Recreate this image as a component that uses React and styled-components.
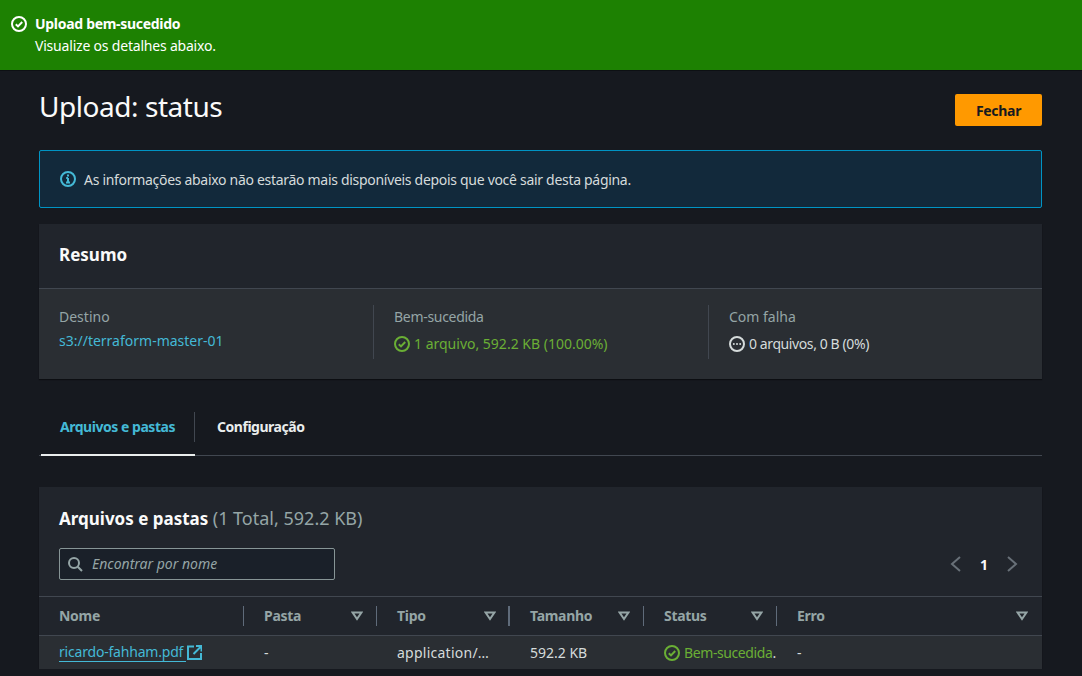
import styled, { createGlobalStyle } from "styled-components";

const GlobalStyle = createGlobalStyle`
  html, body {
    margin: 0;
    background: #16191f;
    font-family: "Noto Sans", "Open Sans", sans-serif;
    font-size: 14px;
    color: #d5dbdb;
    overflow: hidden;
  }
`;

const columns = [
  { name: "Nome" },
  { name: "Pasta", filter: true },
  { name: "Tipo", filter: true, thick: true },
  { name: "Tamanho", filter: true },
  { name: "Status", filter: true },
  { name: "Erro", filter: true, last: true },
];

function CheckCircle({ size = 16, color = "currentColor" }) {
  return (
    <svg width={size} height={size} viewBox="0 0 16 16" fill="none" stroke={color} strokeWidth="2">
      <circle cx="8" cy="8" r="7" />
      <path d="M4.8 8.2l2.2 2.2 4.2-4.4" />
    </svg>
  );
}

function InfoCircle() {
  return (
    <svg width="16" height="16" viewBox="0 0 16 16" fill="none" stroke="#44b9d6" strokeWidth="2">
      <circle cx="8" cy="8" r="7" />
      <path d="M8 7v4.5M6 11.6h4M6.2 7.1H8" strokeWidth="2" />
      <path d="M8 3.6v1.8" strokeWidth="2" />
    </svg>
  );
}

function PendingCircle() {
  return (
    <svg width="16" height="16" viewBox="0 0 16 16" fill="none" stroke="#d5dbdb" strokeWidth="2">
      <circle cx="8" cy="8" r="7" />
      <circle cx="4.8" cy="8" r="1" fill="#d5dbdb" stroke="none" />
      <circle cx="8" cy="8" r="1" fill="#d5dbdb" stroke="none" />
      <circle cx="11.2" cy="8" r="1" fill="#d5dbdb" stroke="none" />
    </svg>
  );
}

function SearchIcon() {
  return (
    <svg width="16" height="16" viewBox="0 0 16 16" fill="none" stroke="#95a5a6" strokeWidth="2">
      <circle cx="7" cy="7" r="5" />
      <path d="M10.7 10.7L15 15" />
    </svg>
  );
}

function ExternalIcon() {
  return (
    <svg width="15" height="15" viewBox="0 0 15 15" fill="none" stroke="#44b9d6" strokeWidth="2">
      <path d="M7 1.5H1v12.5h13V8" />
      <path d="M9 1h5.5v5.5M14 1.5L6.5 9" />
    </svg>
  );
}

function SortCaret() {
  return (
    <svg width="12" height="10" viewBox="0 0 12 10" fill="none" stroke="#95a5a6" strokeWidth="2">
      <path d="M1.6 1.5h8.8L6 8z" />
    </svg>
  );
}

function Chevron({ flip }) {
  return (
    <svg width="12" height="16" viewBox="0 0 12 16" fill="none" stroke="#687078" strokeWidth="2">
      <path d={flip ? "M2 1l8 7-8 7" : "M10 1L2 8l8 7"} />
    </svg>
  );
}

export default function App() {
  return (
    <>
      <GlobalStyle />
      <Flash>
        <FlashIcon><CheckCircle size={16} color="#fff" /></FlashIcon>
        <div>
          <FlashTitle>Upload bem-sucedido</FlashTitle>
          <FlashText>Visualize os detalhes abaixo.</FlashText>
        </div>
      </Flash>
      <Page>
        <Header>
          <Title>Upload: status</Title>
          <CloseButton>Fechar</CloseButton>
        </Header>
        <InfoBox>
          <InfoCircle />
          As informações abaixo não estarão mais disponíveis depois que você sair desta página.
        </InfoBox>
        <SummaryCard>
          <CardHeading>Resumo</CardHeading>
          <SummaryBody>
            <SummaryCol>
              <Label>Destino</Label>
              <BucketLink>s3://terraform-master-01</BucketLink>
            </SummaryCol>
            <SummaryCol>
              <Label $tight>Bem-sucedida</Label>
              <StatusLine $color="#6aaf35">
                <CheckCircle size={16} />
                1 arquivo, 592.2 KB (100.00%)
              </StatusLine>
            </SummaryCol>
            <SummaryCol>
              <Label>Com falha</Label>
              <StatusLine $color="#d5dbdb" $tight>
                <PendingCircle />
                0 arquivos, 0 B (0%)
              </StatusLine>
            </SummaryCol>
          </SummaryBody>
        </SummaryCard>
        <Tabs>
          <Tab $active>Arquivos e pastas</Tab>
          <Tab>Configuração</Tab>
        </Tabs>
        <TableCard>
          <TableTitle>
            Arquivos e pastas <Count>(1 Total, 592.2 KB)</Count>
          </TableTitle>
          <Toolbar>
            <Search>
              <SearchIcon />
              <Placeholder>Encontrar por nome</Placeholder>
            </Search>
            <Pager>
              <Chevron />
              <PageNumber>1</PageNumber>
              <Chevron flip />
            </Pager>
          </Toolbar>
          <HeadRow>
            {columns.map((c) => (
              <HeadCell key={c.name} $last={c.last} $thick={c.thick}>
                <HeadLabel>{c.name}</HeadLabel>
                {c.filter && <SortCaret />}
              </HeadCell>
            ))}
          </HeadRow>
          <BodyRow>
            <Cell>
              <FileLink>ricardo-fahham.pdf</FileLink>
              <ExternalIcon />
            </Cell>
            <Cell>-</Cell>
            <Cell $spacing="0.25px">application/…</Cell>
            <Cell>592.2 KB</Cell>
            <Cell>
              <StatusLine $color="#6aaf35" $tight>
                <CheckCircle size={16} />
                <span>Bem-sucedida<Dot>.</Dot></span>
              </StatusLine>
            </Cell>
            <Cell>-</Cell>
          </BodyRow>
        </TableCard>
      </Page>
    </>
  );
}

const Flash = styled.div`
  height: 71px;
  box-sizing: border-box;
  background: #1d8102;
  border-bottom: 1px solid #0d1014;
  color: #fff;
  display: flex;
  gap: 8px;
  padding: 14px 0 0 11px;
`;

const FlashIcon = styled.div`
  display: flex;
  padding-top: 2px;
`;

const FlashTitle = styled.div`
  font-weight: 700;
  line-height: 20px;
  letter-spacing: -0.3px;
`;

const FlashText = styled.div`
  line-height: 22px;
  padding-top: 1px;
  letter-spacing: -0.2px;
`;

const Page = styled.div`
  padding: 0 40px 0 39px;
`;

const Header = styled.div`
  display: flex;
  justify-content: space-between;
  align-items: flex-start;
  height: 79px;
  box-sizing: border-box;
  padding-top: 16px;
`;

const Title = styled.h1`
  margin: 0;
  font-size: 28px;
  line-height: 38px;
  font-weight: 400;
  letter-spacing: -0.45px;
  color: #fafafa;
`;

const CloseButton = styled.button`
  width: 87px;
  height: 32px;
  border: none;
  border-radius: 2px;
  background: #ff9900;
  color: #16191f;
  font: 700 14px "Noto Sans", sans-serif;
  letter-spacing: -0.3px;
  margin-top: 7px;
`;

const InfoBox = styled.div`
  height: 58px;
  box-sizing: border-box;
  border: 1px solid #0094c4;
  border-radius: 2px;
  background: #12293b;
  display: flex;
  align-items: center;
  gap: 8px;
  padding-left: 20px;
  letter-spacing: -0.3px;
`;

const SummaryCard = styled.section`
  margin-top: 16px;
  background: #21252c;
  box-shadow: 0 1px 1px #0c0e12;
`;

const CardHeading = styled.h2`
  margin: 0;
  height: 65px;
  box-sizing: border-box;
  padding: 19px 20px 0;
  font-size: 17px;
  font-weight: 700;
  line-height: 24px;
  color: #fafafa;
  border-bottom: 1px solid #414750;
`;

const SummaryBody = styled.div`
  background: #2a2e33;
  height: 90px;
  box-sizing: border-box;
  padding: 16px 0 0 20px;
  display: grid;
  grid-template-columns: 314px 335px 1fr;
`;

const SummaryCol = styled.div`
  height: 54px;
  box-sizing: border-box;
  padding-top: 1px;
  & + & {
    border-left: 1px solid #414750;
    padding-left: 20px;
  }
`;

const Label = styled.div`
  color: #95a5a6;
  line-height: 22px;
  letter-spacing: ${(p) => (p.$tight ? "-0.3px" : "0")};
`;

const BucketLink = styled.a`
  display: block;
  color: #44b9d6;
  line-height: 26px;
`;

const StatusLine = styled.div`
  display: flex;
  align-items: center;
  gap: 4px;
  color: ${(p) => p.$color};
  line-height: 22px;
  padding-top: 5px;
  white-space: nowrap;
  letter-spacing: ${(p) => (p.$tight ? "-0.4px" : "0")};
`;

const Tabs = styled.nav`
  margin-top: 21px;
  height: 56px;
  box-sizing: border-box;
  border-bottom: 1px solid #414750;
  display: flex;
  align-items: stretch;
  padding-left: 2px;
`;

const Tab = styled.div`
  width: ${(p) => (p.$active ? "154px" : "auto")};
  box-sizing: border-box;
  height: 56px;
  display: flex;
  align-items: center;
  font-weight: 700;
  letter-spacing: -0.47px;
  padding: ${(p) => (p.$active ? "0 0 2px 19px" : "0 0 4px 22px")};
  color: ${(p) => (p.$active ? "#44b9d6" : "#eaeded")};
  border-bottom: ${(p) => (p.$active ? "2px solid #eaeded" : "none")};
  ${(p) => p.$active && "position: relative; &::after { content: ''; position: absolute; right: 0; top: 12px; height: 30px; border-right: 1px solid #414750; }"}
`;

const TableCard = styled.section`
  margin-top: 31px;
  height: 182px;
  background: #21252c;
  box-shadow: 0 1px 1px #0c0e12;
`;

const TableTitle = styled.h2`
  margin: 0;
  padding: 19px 20px 0;
  font-size: 17px;
  line-height: 24px;
  font-weight: 700;
  color: #fafafa;
`;

const Count = styled.span`
  font-size: 18px;
  font-weight: 400;
  color: #95a5a6;
`;

const Toolbar = styled.div`
  display: flex;
  justify-content: space-between;
  align-items: center;
  padding: 17px 24px 0 20px;
`;

const Search = styled.div`
  width: 276px;
  height: 32px;
  box-sizing: border-box;
  border: 1px solid #879596;
  border-radius: 2px;
  background: #1a2029;
  display: flex;
  align-items: center;
  gap: 9px;
  padding-left: 7px;
`;

const Placeholder = styled.span`
  font-style: italic;
  color: #95a5a6;
  padding-bottom: 2px;
`;

const Pager = styled.div`
  display: flex;
  align-items: center;
  gap: 18px;
`;

const PageNumber = styled.span`
  font-weight: 700;
  color: #fafafa;
`;

const HeadRow = styled.div`
  margin-top: 16px;
  height: 40px;
  box-sizing: border-box;
  border-top: 1px solid #414750;
  border-bottom: 1px solid #414750;
  display: grid;
  grid-template-columns: 205px 133px 133px 134px 133px 1fr;
  align-items: center;
`;

const HeadCell = styled.div`
  height: 20px;
  display: flex;
  align-items: center;
  justify-content: space-between;
  padding: 0 ${(p) => (p.$last ? "14px" : p.$thick ? "12px" : "13px")} 0 20px;
  font-weight: 700;
  color: #95a5a6;
  border-right: ${(p) => (p.$last ? "none" : p.$thick ? "2px solid #5f6b7a" : "1px solid #5f6b7a")};
`;

const HeadLabel = styled.span`
  letter-spacing: -0.3px;
  padding-bottom: 2px;
`;

const BodyRow = styled.div`
  height: 33px;
  background: #2a2e33;
  display: grid;
  grid-template-columns: 205px 133px 133px 134px 133px 1fr;
  align-items: center;
`;

const Cell = styled.div`
  display: flex;
  align-items: center;
  gap: 1px;
  padding-left: 20px;
  color: #d5dbdb;
  white-space: nowrap;
  letter-spacing: ${(p) => p.$spacing || "0"};
  ${StatusLine} {
    padding-top: 0;
    gap: 4px;
  }
`;

const FileLink = styled.a`
  color: #44b9d6;
  border-bottom: 1px solid #44b9d6;
  line-height: 18px;
  letter-spacing: -0.2px;
  padding-right: 3px;
`;

const Dot = styled.span`
  color: #d5dbdb;
`;
